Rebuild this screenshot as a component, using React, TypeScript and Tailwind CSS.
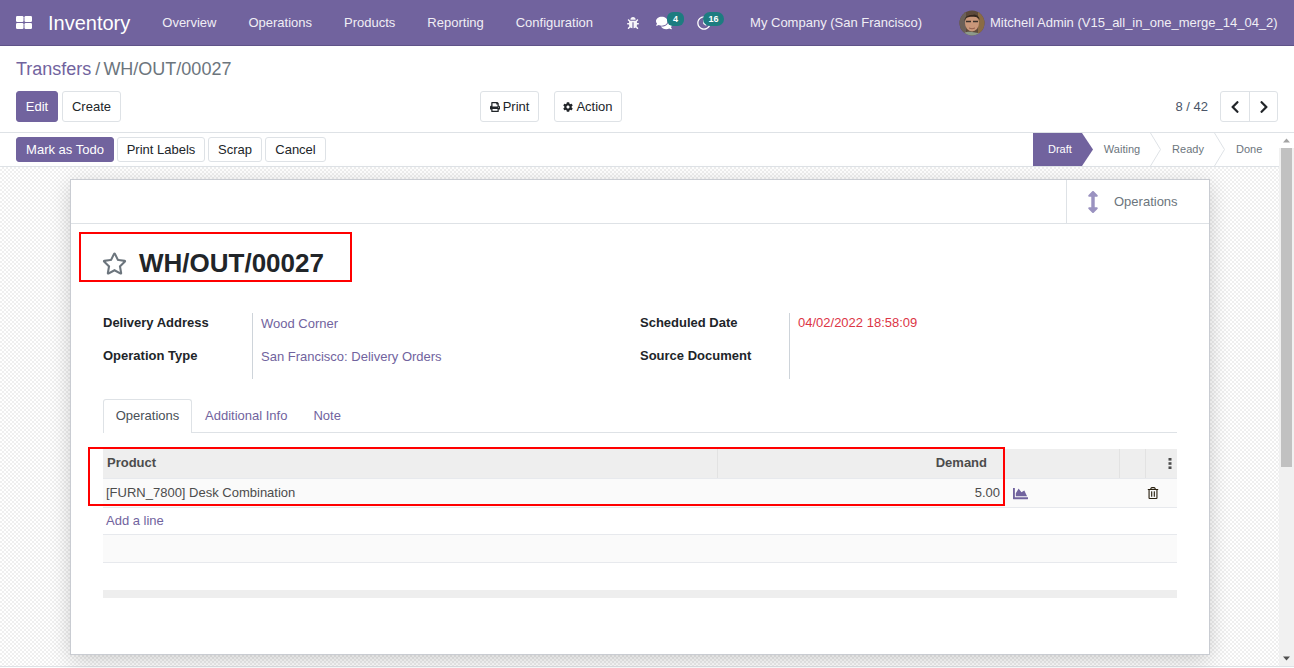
import { FaBug, FaComments, FaRegClock, FaPrint, FaCog, FaChevronLeft, FaChevronRight, FaArrowsAltV, FaRegStar, FaChartArea, FaRegTrashAlt } from "react-icons/fa";

function Btn({ children, primary, className = "" }: { children: React.ReactNode; primary?: boolean; className?: string }) {
  return (
    <button className={"flex items-center justify-center rounded-[3px] border text-[13px] " + (primary ? "border-[#71639e] bg-[#71639e] text-white " : "border-[#dee2e6] bg-white text-[#212529] ") + className}>
      {children}
    </button>
  );
}

function Chevron() {
  return (
    <svg width="11" height="33" viewBox="0 0 11 33" className="shrink-0">
      <path d="M0.5 0L10.5 16.5L0.5 33" fill="none" stroke="#dee2e6" strokeWidth="1" />
    </svg>
  );
}

export default function App() {
  return (
    <div className="flex h-[668px] w-[1294px] flex-col overflow-hidden bg-white font-['Liberation_Sans',Arial,sans-serif] text-[13px] text-[#4c4c4c]">
      {/* navbar */}
      <header className="flex h-[46px] shrink-0 items-center border-b border-[#5f5388] bg-[#71639e] text-white">
        <svg width="16" height="13" viewBox="0 0 16 13" className="ml-4">
          <rect x="0" y="0" width="7.5" height="6" rx="1.2" fill="#fff" />
          <rect x="8.5" y="0" width="7.5" height="6" rx="1.2" fill="#fff" />
          <rect x="0" y="7" width="7.5" height="6" rx="1.2" fill="#fff" />
          <rect x="8.5" y="7" width="7.5" height="6" rx="1.2" fill="#fff" />
        </svg>
        <span className="ml-4 text-[20px] leading-none">Inventory</span>
        <nav className="ml-8 flex gap-8 text-[13px] text-[#f0eef5]">
          <span>Overview</span>
          <span>Operations</span>
          <span>Products</span>
          <span>Reporting</span>
          <span>Configuration</span>
        </nav>
        <FaBug className="ml-[34px] text-[12px] text-[#f6f5f9]" />
        <div className="relative ml-[17px]">
          <FaComments className="text-[16px]" />
          <span className="absolute -top-[3px] left-[11px] w-[17px] rounded-[6px] bg-[#1d7c80] text-center text-[9px] font-bold leading-[14px]">4</span>
        </div>
        <div className="relative ml-[25px]">
          <FaRegClock className="text-[14px]" />
          <span className="absolute -top-[4px] left-[6px] w-[21px] rounded-[7px] bg-[#1d7c80] text-center text-[9px] font-bold leading-[14px]">16</span>
        </div>
        <span className="ml-[39px] text-[13px] text-[#f0eef5]">My Company (San Francisco)</span>
        <svg width="26" height="26" viewBox="0 0 26 26" className="ml-[37px] shrink-0">
          <defs>
            <clipPath id="av"><circle cx="13" cy="13" r="12.5" /></clipPath>
          </defs>
          <g clipPath="url(#av)">
            <rect width="26" height="26" fill="#5d4a3b" />
            <rect x="0" y="0" width="7" height="26" fill="#6b6058" />
            <rect x="19" y="0" width="7" height="26" fill="#8a6b44" />
            <ellipse cx="13" cy="13" rx="7" ry="8.5" fill="#c9977a" />
            <path d="M5.5 11C5 3 21 2 20.5 10L19 8C15 6 10 7 7 8Z" fill="#33261e" />
            <path d="M7 11.5h5M14 11.5h5" fill="none" stroke="#3a302b" strokeWidth="1.6" />
            <path d="M10 18q3 1.6 6 0" fill="none" stroke="#935f4d" strokeWidth="1" />
            <path d="M3 26c1-4 6-5 10-4s9 0 10 4z" fill="#8d9a8a" />
          </g>
        </svg>
        <span className="ml-[5px] whitespace-nowrap text-[13px] text-[#f0eef5]">Mitchell Admin (V15_all_in_one_merge_14_04_2)</span>
      </header>

      {/* control panel */}
      <section className="h-[87px] shrink-0 border-b border-[#dee2e6] px-4">
        <div className="flex h-[45px] items-center pt-[1px] text-[18px]">
          <span className="text-[#71639e]">Transfers</span>
          <span className="ml-[4px] mr-[3px] text-[#6c757d]">/</span>
          <span className="text-[#6c757d]">WH/OUT/00027</span>
        </div>
        <div className="flex h-[31px] items-center">
          <Btn primary className="h-[31px] w-[42px]">Edit</Btn>
          <Btn className="ml-1 h-[31px] w-[59px]">Create</Btn>
          <Btn className="ml-[359px] h-[31px] w-[59px] gap-[3px]"><FaPrint className="text-[10px]" />Print</Btn>
          <Btn className="ml-[15px] h-[31px] w-[68px] gap-[3px]"><FaCog className="text-[10px]" />Action</Btn>
          <span className="ml-auto mr-[12px] text-[13px] text-[#4a5568]">8 / 42</span>
          <div className="flex h-[31px] w-[58px] rounded-[3px] border border-[#dee2e6] text-[#212529]">
            <div className="flex w-[29px] items-center justify-center border-r border-[#dee2e6]"><FaChevronLeft className="text-[14px]" /></div>
            <div className="flex flex-1 items-center justify-center"><FaChevronRight className="text-[14px]" /></div>
          </div>
        </div>
      </section>

      {/* scrolling area */}
      <div className="mb-[1px] flex min-h-0 flex-1 border-b border-[#dee2e6]">
        <main className="flex min-w-0 flex-1 flex-col">
          {/* statusbar */}
          <div className="flex h-[34px] shrink-0 items-center border-b border-[#dee2e6] bg-white pl-4">
            <div className="flex gap-[3px]">
              <Btn primary className="h-[25px] w-[98px]">Mark as Todo</Btn>
              <Btn className="h-[25px] w-[88px]">Print Labels</Btn>
              <Btn className="h-[25px] w-[54px]">Scrap</Btn>
              <Btn className="h-[25px] w-[61px]">Cancel</Btn>
            </div>
            <div className="ml-auto flex h-[33px] items-center self-start text-[11px] text-[#6c757d]">
              <div className="flex h-[33px] w-[60px] items-center bg-[#71639e] pl-[15px] text-white [clip-path:polygon(0_0,49px_0,60px_50%,49px_100%,0_100%)]">Draft</div>
              <div className="flex w-[57px] justify-center pl-[1px]">Waiting</div>
              <Chevron />
              <div className="flex w-[53px] justify-center pl-[1px]">Ready</div>
              <Chevron />
              <div className="w-[54px] pl-[11px]">Done</div>
            </div>
          </div>

          {/* background */}
          <div className="relative flex-1 bg-[repeating-conic-gradient(#efefef_0_25%,#ffffff_0_50%)] bg-[length:4px_4px] px-[70px] pt-[12px]">
            <div className="relative h-[476px] w-[1140px] border border-[#c9ccd2] bg-white shadow-[0_5px_20px_-1px_rgba(0,0,0,0.2)]">
              {/* button box */}
              <div className="flex h-[44px] justify-end border-b border-[#dee2e6]">
                <div className="flex w-[143px] items-center border-l border-[#dee2e6] pl-[15px] text-[#6c757d]">
                  <FaArrowsAltV className="text-[22px] text-[#9a92c0]" />
                  <span className="ml-[10px] pt-[1px]">Operations</span>
                </div>
              </div>

              {/* title */}
              <div className="flex items-center pl-[31px] pt-[24px]">
                <FaRegStar className="text-[25px] text-[#6c757d]" />
                <h1 className="ml-[12px] text-[26px] font-bold leading-[30px] text-[#212529]">WH/OUT/00027</h1>
              </div>

              {/* groups */}
              <div className="mt-[35px] flex h-[66px] pl-[32px] text-[13px]">
                <div className="flex w-[537px]">
                  <div className="-mt-[7px] w-[149px] shrink-0 font-bold leading-[33px] text-[#212529]">
                    <div>Delivery Address</div>
                    <div>Operation Type</div>
                  </div>
                  <div className="h-[66px] border-l border-[#ced4da] pl-2 text-[#71639e]">
                    <div className="-mt-[6px] leading-[33px]">Wood Corner</div>
                    <div className="leading-[33px]">San Francisco: Delivery Orders</div>
                  </div>
                </div>
                <div className="flex">
                  <div className="-mt-[7px] w-[149px] shrink-0 font-bold leading-[33px] text-[#212529]">
                    <div>Scheduled Date</div>
                    <div>Source Document</div>
                  </div>
                  <div className="h-[66px] border-l border-[#ced4da] pl-2 text-[#dc3545]">
                    <div className="-mt-[7px] leading-[33px]">04/02/2022 18:58:09</div>
                  </div>
                </div>
              </div>

              {/* tabs */}
              <div className="mx-[32px] mt-[20px] flex h-[34px] border-b border-[#dee2e6]">
                <div className="flex h-[34px] w-[89px] items-center justify-center rounded-t-[3px] border border-b-0 border-[#dee2e6] bg-white pb-[2px] text-[#495057]">Operations</div>
                <div className="ml-[13px] flex items-center text-[#71639e]">Additional Info</div>
                <div className="ml-[26px] flex items-center text-[#71639e]">Note</div>
              </div>

              {/* table */}
              <div className="mx-[32px] mt-[16px] text-[13px]">
                <div className="grid h-[30px] grid-cols-[614px_288px_114px_26px_32px] border-b border-[#e7e9ed] bg-[#eeeeee] font-bold leading-[28px] text-[#4c4c4c]">
                  <div className="pl-1">Product</div>
                  <div className="border-l border-[#e2e2e2] pr-[18px] text-right">Demand</div>
                  <div />
                  <div className="border-l border-[#e2e2e2]" />
                  <div className="flex items-center justify-end border-l border-[#e2e2e2] pr-[5px]">
                    <svg width="4" height="11" viewBox="0 0 4 11"><rect x="0.5" y="0" width="3" height="2.6" fill="#4c4c4c" /><rect x="0.5" y="4.2" width="3" height="2.6" fill="#4c4c4c" /><rect x="0.5" y="8.4" width="3" height="2.6" fill="#4c4c4c" /></svg>
                  </div>
                </div>
                <div className="grid h-[29px] grid-cols-[614px_288px_114px_26px_32px] items-center border-b border-[#e7e9ed] bg-[#fafafa] text-[#4c4c4c]">
                  <div className="pl-[3px]">[FURN_7800] Desk Combination</div>
                  <div className="pr-[5px] text-right">5.00</div>
                  <div className="pl-2"><FaChartArea className="text-[15px] text-[#71639e]" /></div>
                  <div />
                  <div className="pl-[2px]"><FaRegTrashAlt className="text-[12px] text-[#2a2110]" /></div>
                </div>
                <div className="h-[27px] border-b border-[#e7e9ed] pl-[3px] leading-[26px] text-[#71639e]">Add a line</div>
                <div className="h-[28px] border-b border-[#e7e9ed] bg-[#fafafa]" />
                <div className="h-[27px]" />
                <div className="h-[8px] bg-[#eeeeee]" />
              </div>

              {/* annotations */}
              <div className="pointer-events-none absolute left-[8px] top-[52px] h-[50px] w-[273px] border-2 border-[#ff0000]" />
              <div className="pointer-events-none absolute left-[17px] top-[267px] h-[59px] w-[917px] border-2 border-[#ff0000]" />
            </div>
          </div>
        </main>

        {/* scrollbar */}
        <div className="flex w-[15px] shrink-0 flex-col items-center bg-[#f1f1f1]">
          <svg width="15" height="15" viewBox="0 0 15 15" className="shrink-0 bg-white"><path d="M4 9.5L7.5 5.5L11 9.5Z" fill="#a3a3a3" /></svg>
          <div className="h-[319px] w-[11px] shrink-0 bg-[#c1c1c1]" />
          <div className="flex-1" />
          <svg width="15" height="15" viewBox="0 0 15 15" className="shrink-0"><path d="M4 5.5L7.5 9.5L11 5.5Z" fill="#505050" /></svg>
        </div>
      </div>
    </div>
  );
}
